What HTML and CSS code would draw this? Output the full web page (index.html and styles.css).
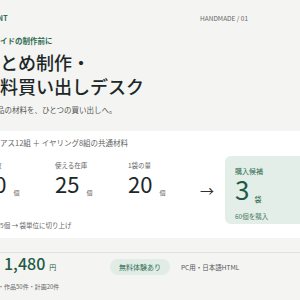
FILE: index.html
```html
<!DOCTYPE html>
<html lang="ja">
<head>
    <meta charset="UTF-8">
    <meta name="viewport" content="width=device-width, initial-scale=1.0">
    <title>まとめ制作・材料買い出しデスク</title>
    <link rel="stylesheet" href="styles.css">
</head>
<body>
    <div class="page">
        <header class="hero">
            <div class="top">
                <span class="brand">COUNT</span>
                <span class="issue">HANDMADE / 01</span>
            </div>
            <p class="eyebrow">ガイドの制作前に</p>
            <h1 class="title">まとめ制作・<br>材料買い出しデスク</h1>
            <p class="lead">全作品の材料を、ひとつの買い出しへ。</p>
        </header>

        <section class="calc-panel">
            <p class="scope">ピアス12組 ＋ イヤリング8組の共通材料</p>
            <div class="calc">
                <div class="inputs">
                    <div class="stats">
                        <div class="stat">
                            <span class="stat-label">必要数</span>
                            <div class="stat-value"><strong>80</strong><span>個</span></div>
                        </div>
                        <div class="stat">
                            <span class="stat-label">使える在庫</span>
                            <div class="stat-value"><strong>25</strong><span>個</span></div>
                        </div>
                        <div class="stat">
                            <span class="stat-label">1袋の量</span>
                            <div class="stat-value"><strong>20</strong><span>個</span></div>
                        </div>
                    </div>
                    <p class="note">不足 55個 → 袋単位に切り上げ</p>
                </div>
                <span class="arrow">→</span>
                <div class="result">
                    <span class="result-label">購入候補</span>
                    <div class="result-value"><strong>3</strong><span>袋</span></div>
                    <p class="result-note">60個を購入</p>
                </div>
            </div>
        </section>

        <footer class="foot">
            <div class="foot-inner">
                <div class="price-row">
                    <div class="price">
                        <span class="price-label">価格</span>
                        <strong>1,480</strong>
                        <span class="yen">円</span>
                    </div>
                    <span class="badge">無料体験あり</span>
                    <span class="spec">PC用・日本語HTML</span>
                </div>
                <p class="limits">100件・作品50件・計画20件</p>
            </div>
        </footer>
    </div>
</body>
</html>
```

FILE: styles.css
```css
* {
    box-sizing: border-box;
    margin: 0;
}
body {
    margin: 0;
    display: flex;
    justify-content: center;
    overflow: hidden;
    font-family: "Noto Sans CJK JP", "Noto Sans", sans-serif;
    color: #1c2727;
    background: #f4f4f2;
}
.page {
    flex: 0 0 400px;
    width: 400px;
}

/* hero */
.hero {
    background: #f4f4f2;
    padding: 12.6px 32px 16px;
}
.top {
    display: grid;
    grid-template-columns: 218px auto;
    font-size: 7px;
    line-height: 10px;
}
.brand {
    color: #2f6b52;
    font-weight: 700;
    letter-spacing: .04em;
}
.issue {
    font-size: 6.5px;
    color: #666;
}
.eyebrow {
    display: flex;
    align-items: center;
    gap: 3.5px;
    margin-top: 13.4px;
    font-size: 7.5px;
    line-height: 10px;
    font-weight: 700;
    color: #2f6b52;
}
.eyebrow::before {
    content: "";
    width: 7px;
    height: 1px;
    background: #2f6b52;
}
.title {
    margin-top: 4.5px;
    font-size: 18px;
    line-height: 24px;
    font-weight: 500;
}
.lead {
    margin-top: 5.5px;
    font-size: 7.5px;
    line-height: 11px;
    color: #555;
}

/* calculation */
.calc-panel {
    background: #fff;
    padding: 6.6px 32px 8.4px;
}
.scope {
    display: flex;
    align-items: center;
    gap: 3.5px;
    font-size: 7.5px;
    line-height: 10px;
    color: #666;
}
.scope::before {
    content: "";
    width: 7px;
    height: 1px;
    background: #bbb;
}
.calc {
    display: flex;
    align-items: flex-start;
    gap: 10px;
    margin-top: 8.4px;
}
.inputs {
    flex: 0 0 208px;
    padding-top: 3.6px;
}
.stats {
    display: grid;
    grid-template-columns: 73px 73px 62px;
}
.stat-label {
    display: block;
    font-size: 6.5px;
    line-height: 10px;
    color: #666;
}
.stat-value {
    display: flex;
    align-items: flex-end;
    gap: 7px;
}
.stat-value strong {
    font-size: 22px;
    line-height: 26px;
    font-weight: 400;
}
.stat-value span {
    font-size: 6px;
    line-height: 6px;
    color: #666;
}
.note {
    margin-top: 24px;
    font-size: 6.5px;
    line-height: 10px;
    color: #666;
}
.arrow {
    width: 15px;
    margin-top: 24px;
    font-size: 14px;
    line-height: 20px;
    color: #333;
}
.result {
    flex: 1;
    padding: 9.6px 10px 3.4px;
    border-radius: 6px;
    background: #e2eee7;
    color: #1f5b44;
}
.result-label {
    display: block;
    font-size: 7px;
    line-height: 10px;
    color: #2f6b52;
}
.result-value {
    display: flex;
    align-items: flex-end;
    gap: 5px;
}
.result-value strong {
    font-size: 26px;
    line-height: 26px;
    font-weight: 400;
}
.result-value span {
    font-size: 7px;
    line-height: 6px;
}
.result-note {
    margin-top: 10px;
    font-size: 6.5px;
    line-height: 9px;
    color: #4d7a64;
}

/* footer */
.foot {
    background: #f4f4f2;
    padding: 14px 32px 0;
}
.foot-inner {
    border-top: 1px solid #e2e2de;
}
.price-row {
    display: flex;
    align-items: baseline;
}
.price {
    display: flex;
    align-items: baseline;
    width: 128px;
    color: #1f5b44;
}
.price-label {
    width: 22px;
    font-size: 7px;
    color: #666;
}
.price strong {
    font-size: 16px;
    line-height: 20px;
    font-weight: 500;
}
.yen {
    margin-left: 4px;
    font-size: 7px;
}
.badge {
    padding: 3.5px 9px;
    border-radius: 9px;
    background: #e0ece5;
    color: #2f6b52;
    font-size: 7px;
    line-height: 9px;
}
.spec {
    margin-left: 11px;
    font-size: 6.5px;
    color: #555;
}
.limits {
    margin-top: 7px;
    font-size: 6px;
    line-height: 10px;
    color: #666;
}
```
